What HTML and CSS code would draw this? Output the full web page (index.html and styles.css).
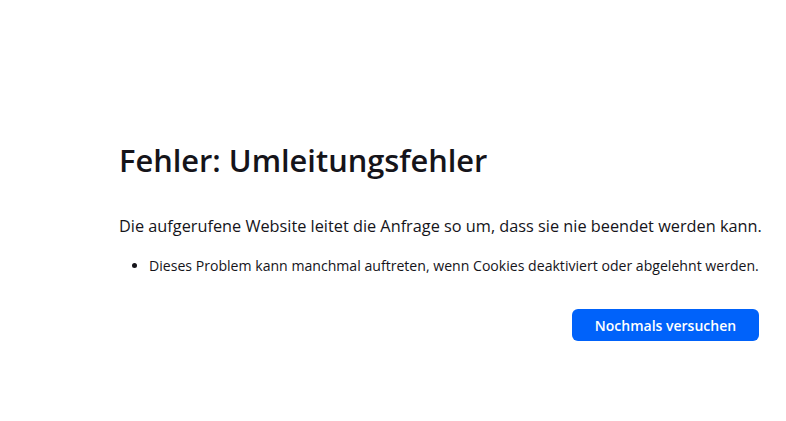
FILE: index.html
```html
<!DOCTYPE html>
<html lang="de">
<head>
<meta charset="utf-8">
<title>Umleitungsfehler</title>
<link rel="stylesheet" href="styles.css">
</head>
<body>
<main class="container">
  <h1 class="title">Fehler: Umleitungsfehler</h1>
  <p class="desc">Die aufgerufene Website leitet die Anfrage so um, dass sie nie beendet werden kann.</p>
  <ul class="hints">
    <li>Dieses Problem kann manchmal auftreten, wenn Cookies deaktiviert oder abgelehnt werden.</li>
  </ul>
  <div class="actions">
    <button class="retry">Nochmals versuchen</button>
  </div>
</main>
</body>
</html>
```
FILE: styles.css
```css
html, body {
  margin: 0;
  padding: 0;
  background: #ffffff;
  color: #15141a;
  font-family: "Open Sans", "Noto Sans", sans-serif;
}
.container {
  width: 646px;
  margin-left: 119px;
  padding-top: 136px;
}
.title {
  margin: 0;
  font-size: 30.8px;
  font-weight: 600;
  line-height: 48px;
}
.desc {
  margin: 30px 0 0;
  font-size: 16.3px;
  line-height: 24px;
}
.hints {
  margin: 18px 0 0;
  padding-left: 30px;
  font-size: 14.1px;
  line-height: 20px;
}
.actions {
  display: flex;
  justify-content: flex-end;
  margin-top: 33px;
  padding-right: 6px;
}
.retry {
  box-sizing: border-box;
  background: #0062fa;
  color: #fff;
  border: none;
  border-radius: 6px;
  font-family: inherit;
  font-weight: 600;
  font-size: 14px;
  height: 32px;
  width: 187px;
  padding: 0;
}
```
